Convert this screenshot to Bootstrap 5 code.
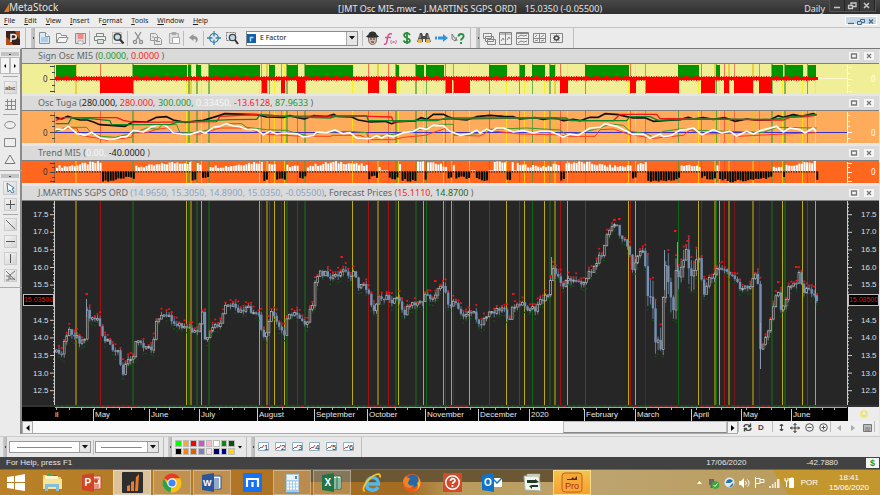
<!DOCTYPE html>
<html lang="en">
<head>
<meta charset="utf-8">
<meta name="viewport" content="width=device-width, initial-scale=1">
<title>MetaStock</title>
<link rel="stylesheet" href="https://cdn.jsdelivr.net/npm/bootstrap@5.3.0/dist/css/bootstrap.min.css">
<style>
body{font:8px/10px "Liberation Sans",Arial,sans-serif;background:#ebebeb;color:#333;min-height:100vh}
svg{display:block}
button,select{font:inherit;color:inherit}
.segoe{font-family:"Noto Sans","Open Sans",sans-serif}
.titlebar{height:14px;background:linear-gradient(#484848,#2e2e2e);color:#e4e4e4;font-size:9px;line-height:14px}
.brand-name{width:290px;font-size:10px}
.winbtns{background:#3b3b3b;border:1px solid #555;border-top:0;height:12px}
.winbtns button{width:15px;height:11px;padding:0;border:0;border-right:1px solid #222;background:none;color:#c8c8c8}
.menubar{height:14px;border-bottom:1px solid #c4c4c4;background:#ededed;padding:0 3px 0 4px}
.menubar a{color:#222;text-decoration:none;font-family:"Noto Sans",sans-serif;font-size:7px;line-height:13px;margin-right:9px}
.mdibtns{background:#c7d8e6;border:1px solid #fff;height:9px}
.mdibtns button{width:10px;height:8px;padding:0;border:0;background:none;color:#496a86}
.toolrow{height:20px;background:#ebebeb}
.tool{display:flex;align-items:center;justify-content:center;width:18px;height:18px;padding:0;border:0;background:none;color:#777;flex:none}
.tool.narrow{width:17px}
.tool.logo{width:25px}
.rule{width:1px;height:15px;background:#bdbdbd;margin-right:1px;flex:none}
.rule.tall{height:20px}
.grip{width:4px;height:20px;background:linear-gradient(90deg,#ccc,#b4b4b4);display:flex;align-items:center;justify-content:center;flex:none}
.grip::after{content:"";width:1px;height:2px;background:#444}
.pick{width:112px;height:15px;background:#fff;border:1px solid #8a8a8a;margin-left:5px}
.pick select{appearance:none;border:0;background:none;padding:0;font-family:"Noto Sans",sans-serif;font-size:7px;line-height:12px;color:#111;min-width:0}
.drop{width:11px;background:#e6e6e6;border-left:1px solid #aaa;display:flex;align-items:center;justify-content:center;pointer-events:none}
.side{width:22px;border-right:2px solid #8b8b8b;background:#ebebeb;border-top:1px solid #d8d8d8;flex:none}
.side .tool{height:17px;width:20px}
.side .tool svg{background:linear-gradient(135deg,#f4f4f4,#d4d4d4);border:1px solid #ccc}
.side .tool.flat svg{background:none;border-color:transparent}
.side hr{width:15px;margin:1px auto;border-color:#aaa;opacity:1}
.side hr.after-steps{margin:2px auto}
.side hr.full{width:22px;margin:3px 0}
.side-grip{width:18px;height:4px;margin:3px auto 1px;background:#c3c3c3;display:flex;align-items:center;justify-content:center}
.side-grip::after{content:"";width:2px;height:1px;background:#444}
.step{width:10px;height:17px;padding:0;border:1px solid #bbb;background:#f4f4f4}
.charts{background:#e6e6e6;border-top:1px solid #777;padding-right:1px;min-width:0}
.pane-head{height:15px;background:#dadada;border-bottom:1px solid #808080;padding-left:16px;font-size:9px;line-height:14px;color:#666;white-space:nowrap}
.pane-head button{width:10px;height:8px;padding:0;border:0;background:#f6f6f6;color:#777;margin-right:5px}
.c-green{color:#1f9a2b}.c-dkgreen{color:#1b6a20}.c-red{color:#fb2424}.c-white{color:#f6f6f6}.c-black{color:#222}.c-blue{color:#8ba6c4}
.plot-row{display:grid;grid-template-columns:33px minmax(0,1fr) 32px}
.plot-row svg{width:100%;height:100%}
.gap-two{margin-bottom:2px}
.gap-three{margin-bottom:3px}
.sign-row{height:30px;background:#f0ee96}
.osc-row{height:32px;background:#ffab5c}
.osc-row span{padding-top:12px}
.trend-row{height:22px;background:#ff671f}
.zero{display:grid;align-items:center;font-family:"Noto Sans",sans-serif;font-size:8px}
.zero>*{grid-area:1/1}
.zero span{padding-left:21px}
.zero.right{color:#fff}
.zero.right span{padding-left:24px}
.price-row{background:#262626;flex:1 1 204px;min-height:204px;color:#dedede}
.scale{display:grid;min-height:0}
.scale>*{grid-area:1/1;min-height:0}
.scale ol{display:flex;flex-direction:column;list-style:none;margin:0;padding:5px 0;font-size:8px}
.scale li{flex:1;display:flex;align-items:center;padding-left:11px}
.scale.right li{padding-left:14px}
.scale li.now,.scale.right li.now{padding-left:1px;align-items:flex-start}
.now b{background:#000;border:1px solid #bbb;color:#e01a1a;font-weight:400;font-size:7px;line-height:10px;width:31px;display:flex;justify-content:center}
.time-row{height:16px;background:#000;color:#e6e6e6;border-top:2px solid #333}
.time-box{display:grid;min-width:0}
.time-box>*{grid-area:1/1}
.months{display:grid;grid-template-columns:38fr 56fr 50fr 58fr 57fr 53fr 58fr 53fr 51fr 55fr 51fr 56fr 50fr 50fr 56fr;height:14px;padding-top:2px;font-size:8px;line-height:12px}
.months span{border-left:1px solid #ccc;padding-left:1px;white-space:nowrap;min-width:0}
.months span:first-child{border:0;padding:0}
.smile{background:#ececec;display:flex;align-items:center;justify-content:center;margin-left:1px}
.smile svg{width:8px;height:8px}
.scroll-row{height:13px;background:#efefef;color:#444}
.scroll-row .arrow{width:11px;height:13px;padding:0;border:1px solid #aaa;background:#f2f2f2;color:#111;display:flex;align-items:center;justify-content:center;flex:none}
.track{background:#fafafa;border-bottom:1px solid #aaa}
.thumb{width:164px;background:#efefef;border:1px solid #bbb;border-bottom-color:#888}
.scroll-row .tool{width:14px;height:13px;color:#444;font-weight:700}
.scroll-row .rule{height:11px;margin:0 1px 0 0}
.lower{height:21px;background:#e8e8e8;border-top:1px solid #ccc;margin-top:2px}
.lower .grip{margin-left:3px}
.linepick{height:12px;background:#fff;border:1px solid #999;display:grid;grid-template-columns:minmax(0,1fr) 11px}
.linepick select{appearance:none;border:0;padding:0;width:100%;height:10px;background:linear-gradient(#888,#888) center/80% 1px no-repeat}
.w-solid{width:82px;margin:0 2px}.w-thin{width:64px}
.swatches{display:grid;width:60px;grid-template-columns:repeat(8,1fr);grid-auto-rows:7px;gap:1px;margin:0 3px}
.swatches button{padding:0;border:1px solid #bbb}
.statusbar{height:12px;background:#424242;color:#e6e6e6;line-height:12px;padding-left:6px}
.bar-date{margin-right:60px}
.bar-value{margin-right:28px}
.dollar{width:13px;height:10px;background:#f4f4f4;color:#1a9a1a;font-weight:700;text-align:center;line-height:10px;font-size:9px;margin-right:1px}
.taskbar{height:26px;background:linear-gradient(#6b5734,#6b5734) 310px 0/280px 12px no-repeat,linear-gradient(57deg,transparent 660px,#c3962e 663px),linear-gradient(90deg,#b98228,#ae7424 30%,#a36a22 46%,#b99b5c 52%,#bda36e 68%,#b99a56);background-size:280px 12px,auto,auto;border-top:1px solid #7b6738;color:#fff}
.task{width:40px;height:25px;padding:0;border:1px solid transparent;background:none;display:flex;align-items:center;justify-content:center;flex:none}
.task.start{width:32px}
.task.open{background:#ffffff30;border-color:#ffffff50;width:38px;margin:0 1px}
.task.front{background:#ffffff88}
.task.hot{background:linear-gradient(#f4c34c,#f7a02c);border-color:#f7dc8c;width:38px;margin:0 1px}
.tray button{width:15px;height:20px;border:0;padding:0;background:none;display:flex;align-items:center;justify-content:center;color:#fff}
.clock{width:62px;text-align:center;line-height:10px}
</style>
<script src="https://cdn.jsdelivr.net/npm/bootstrap@5.3.0/dist/js/bootstrap.bundle.min.js"></script>
</head>
<body class="d-flex flex-column m-0">

<header class="titlebar segoe d-flex">
  <div class="brand-name d-flex align-items-center ps-1"><svg width="5" height="9"><path d="M0 9 5 1v8z" fill="#e0762a"/></svg>MetaStock</div>
  <div class="flex-grow-1 ps-5 text-nowrap pt-1 lh-1"><span>[JMT Osc MI5.mwc - J.MARTINS SGPS ORD]</span><span class="ps-2">15.0350 (-0.05500)</span></div>
  <div class="pe-1 pt-1 lh-1">Daily</div>
  <div class="winbtns d-flex me-1">
    <button aria-label="Minimise"><svg width="13" height="9"><path d="M4 6.500h6" stroke="currentColor" stroke-width="1.500"/></svg></button>
    <button aria-label="Restore"><svg width="13" height="9" fill="none" stroke="currentColor" stroke-width="1.300"><path d="M3.500 4.500h4v3h-4zM6 4V2h5v3.500H8"/></svg></button>
    <button aria-label="Close"><svg width="13" height="9"><path d="m4 2 5 5m0-5L4 7" stroke="currentColor" stroke-width="1.500"/></svg></button>
  </div>
</header>

<nav class="menubar d-flex align-items-center" aria-label="Main menu">
  <div class="d-flex flex-grow-1" id="menu"></div>
  <div class="mdibtns d-flex">
    <button aria-label="Minimise window"><svg width="10" height="7"><path d="M2 5.500h6" stroke="currentColor" stroke-width="1.300"/></svg></button>
    <button aria-label="Restore window"><svg width="10" height="7" fill="none" stroke="currentColor"><path d="M1.500 3.500h4v3h-4zM4.500 3V1.500h4v3H6"/></svg></button>
    <button aria-label="Close window"><svg width="10" height="7"><path d="m3 1.500 4 4m0-4-4 4" stroke="currentColor" stroke-width="1.300"/></svg></button>
  </div>
</nav>

<div class="toolrow d-flex align-items-center">
  <button class="tool logo" aria-label="Power Console"><svg width="14" height="14"><rect width="14" height="14" fill="#3a211a"/><path d="M0 14V6l4 3 3 5zM9 0h5v9l-3-4z" fill="#b14e1c"/><path d="M5 11V3.500h3a2 2 0 0 1 0 4.500H5" fill="none" stroke="#eee" stroke-width="1.600"/></svg></button>
  <span class="rule tall"></span><span class="grip ms-1"></span>
  <button class="tool" aria-label="New"><svg width="13" height="14"><path d="M1.500 1.500h6l4 4v7h-10z" fill="#dbe9f2" stroke="#84919b"/><path d="M3 6h7v5H3z" fill="#a7d0e8"/><path d="M7.500 1.500v4h4" fill="#fff" stroke="#84919b"/></svg></button>
  <button class="tool" aria-label="Open"><svg width="14" height="12" fill="#f5f5f5" stroke="#8b8b8b"><path d="M1.500 10.500v-9h4l1 2h5v2M1.500 10.500l2.500-5h9l-2 5z"/></svg></button>
  <button class="tool" aria-label="Save"><svg width="13" height="13"><path d="M1.500 1.500h10v10h-10z" fill="#ddd" stroke="#8d8d8d"/><path d="M3.500 2h6v5h-6z" fill="#f08c8c"/><path d="M4 9h5v3H4z" fill="#f7f7f7" stroke="#888" stroke-width=".6"/></svg></button>
  <span class="rule"></span>
  <button class="tool" aria-label="Print"><svg width="14" height="13" fill="#eee" stroke="#838383"><path d="M3.500 4.500v-3h7v3M1.500 4.500h11v4h-11z"/><path d="M4.500 7.500h6v4h-6z" fill="#d9e4d9"/></svg></button>
  <button class="tool" aria-label="Preview"><svg width="14" height="14"><path d="M1.500 1.500h9v11h-9z" fill="#eee" stroke="#bbb"/><circle cx="6.500" cy="6" r="3.300" fill="#bfe1ee" stroke="#444" stroke-width="1.500"/><path d="m9 8.500 3.500 4" stroke="#333" stroke-width="2"/></svg></button>
  <span class="rule"></span>
  <button class="tool" aria-label="Cut"><svg width="12" height="14" fill="none" stroke="#8b8b8b" stroke-width="1.300"><path d="m3 1 5 8M9 1 4 9"/><circle cx="3" cy="11" r="1.600"/><circle cx="9" cy="11" r="1.600"/></svg></button>
  <button class="tool" aria-label="Copy"><svg width="14" height="13" fill="#e8e8e8" stroke="#999"><path d="M1.500 1.500h5l2 2v5h-7zM5.500 5.500h5l2 2v5h-7z"/><path d="M7 9.500h4M3 5h2"/></svg></button>
  <button class="tool" aria-label="Paste"><svg width="13" height="14" fill="#e2e2e2" stroke="#aaa"><path d="M1.500 2.500h9v10h-9zM4 1.500h4v2H4z"/><path d="M4.500 6.500h7v6h-7z" fill="#fafafa"/></svg></button>
  <span class="rule"></span>
  <button class="tool" aria-label="Undo"><svg width="12" height="12"><path d="M1 5.500 5.500 2v2c5 0 6 5 1.500 7 2-3 .5-4-1.500-4v2z" fill="#969696"/></svg></button>
  <span class="rule"></span>
  <button class="tool" aria-label="Crosshair"><svg width="14" height="14" fill="none" stroke="#3584ae" stroke-width="1.300"><circle cx="7" cy="7" r="4.300"/><path d="M7 0v5.500M7 8.500V14M0 7h5.500M8.500 7H14"/></svg></button>
  <button class="tool" aria-label="Zoom box"><svg width="14" height="14"><path d="M1.500 1.500h9v8h-9z" fill="none" stroke="#777" stroke-dasharray="2 1"/><circle cx="7.500" cy="6.500" r="3.200" fill="#bdd8e8" stroke="#444" stroke-width="1.300"/><path d="m10 9 3 4" stroke="#333" stroke-width="2"/></svg></button>
  <div class="pick d-flex align-items-stretch">
    <svg class="m-auto mx-1 ms-0" width="9" height="10"><rect y="1" width="9" height="9" fill="#155fa8"/><path d="M3.500 8.500V4.500h3" fill="none" stroke="#9fe0ff" stroke-width="1.500"/></svg>
    <select class="flex-grow-1" aria-label="Expert"><option>E Factor</option></select>
    <span class="drop"><svg width="6" height="4"><path d="M0 0h6L3 3.500z" fill="#111"/></svg></span>
  </div>
  <span class="rule ms-1"></span>
  <button class="tool narrow" aria-label="Expert Advisor"><svg width="13" height="14"><path d="M2.500 5h8v4c0 6-8 6-8 0z" fill="#d5b8a4" stroke="#555" stroke-width=".7"/><path d="M0 6c2 1 10 1 13 0-1-2-3-2-3-4-2-2-5-2-7 0 0 2-2 2-3 4z" fill="#303030"/><path d="M4 8h2m1 0h2M5 11h3" stroke="#333"/></svg></button>
  <button class="tool narrow" aria-label="Indicator builder"><svg width="14" height="13" fill="none" stroke="#d65091" stroke-width="1.500"><path d="M1 12c3 1 3-3 3.500-6S6 1 9 2M2 5.500h6"/><path d="M8.500 8c-1 1-1 2 0 4M12.500 8c1 1 1 2 0 4M9.500 9l2 2m0-2-2 2" stroke-width=".9"/></svg></button>
  <button class="tool narrow" aria-label="System tester"><svg width="10" height="14" fill="none" stroke="#258a37" stroke-width="1.700"><path d="M8 4C6 1 2 2 2 4.500S8 7 8 9.500 3 12.500 1.500 9.500M5 1v12"/></svg></button>
  <button class="tool narrow" aria-label="Explorer"><svg width="14" height="12"><path d="m3 1 2 0 1 3h2l1-3h2l3 9H8V7H6v3H0z" fill="#4b4b4b"/><circle cx="3" cy="9" r="2.200" fill="#e1b44d"/><circle cx="11" cy="9" r="2.200" fill="#e1b44d"/><path d="M3 3v3m8-3v3" stroke="#aaa"/></svg></button>
  <button class="tool narrow" aria-label="Go"><svg width="14" height="8"><path d="M1 2.500h2v3H1zm3 0h5V0l5 4-5 4V5.500H4z" fill="#3294dc"/></svg></button>
  <button class="tool narrow" aria-label="Context help"><svg width="14" height="13" fill="none"><path d="M1 2l4 6M1 2v5l3 2 1-1M5 5l1 4" stroke="#777"/><path d="M7.500 4.500C7.500 1 13 1 12.500 4.500c0 2-2.500 2-2.500 4M10 10v2" stroke="#27943c" stroke-width="2"/></svg></button>
  <span class="rule tall ms-1"></span><span class="grip ms-1"></span>
  <button class="tool narrow" aria-label="Cascade"><svg width="14" height="13" fill="#eee" stroke="#858585"><path d="M1.500 1.500h8v5h-8zM3.500 4.500h8v5h-8zM5.500 7.500h8v5h-8z"/></svg></button>
  <button class="tool narrow" aria-label="Tile columns"><svg width="13" height="13" fill="#eee" stroke="#858585"><path d="M.5.500h12v12H.5zM6.500 1v12M.500 2h12"/><path d="m2 9 2-3 1 2m3 0 2-3 1 2"/></svg></button>
  <button class="tool narrow" aria-label="Tile rows"><svg width="13" height="13" fill="#eee" stroke="#858585"><path d="M.5.500h12v12H.5zM1 6.500h12M.500 1.500h12"/><path d="m2 5 3-2 3 1 3-1M2 11l3-2 3 1 3-1"/></svg></button>
  <button class="tool narrow" aria-label="Tile grid"><svg width="13" height="12" fill="#eee" stroke="#858585"><path d="M.5 1.500h12v9H.5zM6.500 2v9M1 6.500h12"/><path d="m2 5 2-2m4 2 3-2M2 9l3-1m3 1 3-1"/></svg></button>
  <button class="tool narrow" aria-label="Layout options"><svg width="13" height="12" fill="#eee" stroke="#858585"><path d="M.5 1.500h12v9H.5z"/><circle cx="6.500" cy="6" r="2" stroke="#444" stroke-width="1.500"/><path d="M6.500 2.500v1m0 5v1M3 6h1m5 0h1M4 3.500l1 1m3 3 1 1m0-5-1 1m-3 3-1 1" stroke="#444"/></svg></button>
  <span class="rule tall ms-2"></span>
</div>

<main class="d-flex flex-grow-1">
  <aside class="side" aria-label="Drawing tools">
    <div class="side-grip"></div>
    <div class="d-flex">
      <button class="step" aria-label="Previous"><svg width="8" height="6"><path d="M5 1v4L3 3z"/></svg></button><button class="step" aria-label="Next"><svg width="8" height="6"><path d="M3 1v4l2-2z"/></svg></button>
    </div>
    <hr class="after-steps">
    <button class="tool" aria-label="Text"><svg width="13" height="13"><text x="0" y="8" font-size="6" font-weight="700" fill="#555">abc</text></svg></button>
    <button class="tool flat" aria-label="Grid"><svg width="13" height="13" stroke="#888"><path d="M2.500 0v13M6.500 0v13M10.500 0v13M0 2.500h13M0 6.500h13M0 10.500h13"/></svg></button>
    <hr>
    <button class="tool flat" aria-label="Ellipse"><svg width="14" height="12"><ellipse cx="6" cy="5" rx="5.300" ry="3.500" fill="#eee" stroke="#888"/></svg></button>
    <button class="tool flat" aria-label="Rectangle"><svg width="14" height="12"><path d="M.500 1.500h11v8H.5z" fill="#eee" stroke="#888"/></svg></button>
    <button class="tool flat" aria-label="Triangle"><svg width="14" height="12"><path d="M1 9.500 6 1l5 8.500z" fill="#eee" stroke="#777"/></svg></button>
    <hr class="full">
    <div class="side-grip"></div>
    <button class="tool" aria-label="Select"><svg width="14" height="14"><path d="m3 1 7 5-2 1 2 3-2 1-2-3-2 2z" fill="#fff" stroke="#3a7ebb"/></svg></button>
    <button class="tool" aria-label="Cross"><svg width="13" height="13" stroke="#555"><path d="M5.500 1v9M1 5.500h9" /></svg></button>
    <hr>
    <button class="tool" aria-label="Trendline"><svg width="13" height="13" stroke="#666"><path d="m1 1 9 9"/></svg></button>
    <button class="tool" aria-label="Horizontal line"><svg width="13" height="13" stroke="#555"><path d="M1 5.500h9"/></svg></button>
    <button class="tool" aria-label="Vertical line"><svg width="13" height="13" stroke="#555"><path d="M5.500 1v9"/></svg></button>
    <button class="tool" aria-label="More lines"><svg width="13" height="13" stroke="#777" fill="none"><path d="m1 1 9 9M10 1 5 5v4h5M1 6h3v4H1"/></svg></button>
    <hr class="full">
  </aside>

  <section class="charts flex-grow-1 d-flex flex-column" aria-label="Charts">
    <div class="pane-head segoe d-flex"><div class="flex-grow-1">Sign Osc MI5 (<span class="c-green">0.0000,</span> <span class="c-red">0.0000</span> )</div><div class="d-flex align-items-center panebtns"></div></div>
    <div class="plot-row sign-row gap-two">
      <div class="zero"><svg viewBox="0 0 33 30"><path d="M33 1v28M28 2.500h5M30 8.500h3M28 15.500h5M30 21.500h3M28 27.500h5" stroke="#444"/></svg><span>0</span></div>
      <svg id="sign" viewBox="55 64 792 30" preserveAspectRatio="none"></svg>
      <div class="zero right"><svg viewBox="0 0 32 30"><path d="M.5 1v28M0 3.500h5M0 9.500h3M0 15.500h5M0 21.500h3M0 27.500h5" stroke="#fff"/></svg><span>0</span></div>
    </div>
    <div class="pane-head segoe d-flex"><div class="flex-grow-1">Osc Tuga (<span class="c-black">280.000,</span> <span class="c-red">280.000,</span> <span class="c-green">300.000,</span> <span class="c-white">0.33450,</span> <span class="c-red">-13.6128,</span> <span class="c-green">87.9633</span> )</div><div class="d-flex align-items-center panebtns"></div></div>
    <div class="plot-row osc-row gap-three">
      <div class="zero"><svg viewBox="0 0 33 32"><path d="M33 1v31M28 4.500h5M30 10.500h3M30 15.500h3M28 21.500h5M30 27.500h3" stroke="#444"/></svg><span>0</span></div>
      <svg id="osc" viewBox="165 189 2376 96" preserveAspectRatio="none"></svg>
      <div class="zero right"><svg viewBox="0 0 32 32"><path d="M.5 1v31M0 4.500h3M0 10.500h3M0 15.500h3M0 21.500h5M0 27.500h3" stroke="#fff"/></svg><span>0</span></div>
    </div>
    <div class="pane-head segoe d-flex"><div class="flex-grow-1">Trend MI5 (<span class="c-white">0.00,</span> <span class="c-black">-40.0000</span> )</div><div class="d-flex align-items-center panebtns"></div></div>
    <div class="plot-row trend-row gap-three">
      <div class="zero"><svg viewBox="0 0 33 22"><path d="M33 1v21M28 2.500h5M30 6.500h3M28 11.500h5M30 16.500h3M28 20.500h5" stroke="#444"/></svg><span>0</span></div>
      <svg id="trend" viewBox="165 339 2376 66" preserveAspectRatio="none"></svg>
      <div class="zero right"><svg viewBox="0 0 32 22"><path d="M.5 1v21M0 2.500h5M0 6.500h3M0 11.500h5M0 16.500h3M0 20.500h5" stroke="#fff"/></svg><span>0</span></div>
    </div>
    <div class="pane-head segoe d-flex"><div class="flex-grow-1">J.MARTINS SGPS ORD <span class="c-blue">(14.9650, 15.3050, 14.8900, 15.0350, -0.05500)</span>, Forecast Prices (<span class="c-red">15.1110,</span> <span class="c-dkgreen">14.8700</span> )</div><div class="d-flex align-items-center panebtns"></div></div>
    <div class="plot-row price-row">
      <div class="scale"><svg id="ticksL" viewBox="0 201 33 204" preserveAspectRatio="none"></svg><ol class="levels"></ol></div>
      <svg id="price" viewBox="55 201 792 204" preserveAspectRatio="none"></svg>
      <div class="scale right"><svg id="ticksR" viewBox="0 201 32 204" preserveAspectRatio="none"></svg><ol class="levels"></ol></div>
    </div>
    <div class="plot-row time-row">
      <span></span>
      <div class="time-box"><svg id="weeks" viewBox="55 0 792 14" preserveAspectRatio="none"></svg><div class="months" id="months"></div></div>
      <div class="smile"><svg width="8" height="8" fill="none" stroke="#f2e21a"><circle cx="4" cy="4" r="3.300"/><path d="M2.500 3h.5m2 0h.5M2 4.500c1 1.500 3 1.500 4 0"/></svg></div>
    </div>
    <div class="scroll-row d-flex align-items-stretch">
      <button class="arrow" aria-label="Scroll left"><svg width="4" height="6"><path d="M3.500 0v6L0 3z"/></svg></button>
      <div class="track flex-grow-1 d-flex justify-content-end"><div class="thumb"></div></div>
      <button class="arrow" aria-label="Scroll right"><svg width="4" height="6"><path d="M0 0v6l3.500-3z"/></svg></button>
      <span class="rule"></span>
      <button class="tool" aria-label="Refresh"><svg width="9" height="9" fill="none" stroke="#444" stroke-width="1.400"><path d="M1 4c0-3 4-3 6-1M8 5c0 3-4 3-6 1"/><path d="M7.500.500V3.500H5M1.500 8.500V5.500H4"/></svg></button>
      <button class="tool" aria-label="Daily">D</button>
      <span class="rule ms-1"></span>
      <button class="tool" aria-label="Rescale"><svg width="7" height="9" stroke="#444" fill="#444"><path d="M3.500 1v7M2 2.500 3.500 1 5 2.500zM2 6.500 3.500 8 5 6.500z"/></svg></button>
      <button class="tool" aria-label="Move"><svg width="10" height="10" stroke="#333" fill="none"><path d="M5 .500v9M.500 5h9M3.500 2 5 .500 6.500 2M3.500 8 5 9.500 6.500 8M2 3.500.500 5 2 6.500M8 3.500 9.500 5 8 6.500"/></svg></button>
      <button class="tool" aria-label="Zoom out"><svg width="9" height="9" stroke="#555" fill="none"><circle cx="4.500" cy="4.500" r="3.800"/><path d="M2.500 4.500h4"/></svg></button>
      <button class="tool" aria-label="Zoom in"><svg width="9" height="9" stroke="#555" fill="none"><circle cx="4.500" cy="4.500" r="3.800"/><path d="M2.500 4.500h4m-2-2v4"/></svg></button>
      <span class="rule"></span>
      <button class="tool" aria-label="Back"><svg width="4" height="6"><path d="M4 0v6L0 3z" fill="#aaa"/></svg></button>
      <button class="tool" aria-label="Forward"><svg width="4" height="6"><path d="M0 0v6l4-3z" fill="#aaa"/></svg></button>
      <button class="tool" aria-label="Data window"><svg width="9" height="8"><path d="M.5.500h8v7h-8z" fill="#bbb" stroke="#777"/><path d="M2 4h5M2 6h5" stroke="#777"/></svg></button>
      <span class="rule me-1"></span>
    </div>
  </section>
</main>

<div class="lower d-flex align-items-center">
  <span class="grip"></span>
  <label class="linepick w-solid"><select aria-label="Line style"><option aria-label="Solid"></option></select><span class="drop"><svg width="6" height="4"><path d="M0 0h6L3 3.500z" fill="#111"/></svg></span></label>
  <span class="rule"></span>
  <label class="linepick w-thin"><select aria-label="Line weight"><option aria-label="Thin"></option></select><span class="drop"><svg width="6" height="4"><path d="M0 0h6L3 3.500z" fill="#111"/></svg></span></label>
  <span class="rule tall ms-1"></span><span class="grip"></span>
  <div class="swatches" id="swatches"></div>
  <svg width="4" height="3"><path d="M0 0h4L2 2.500z"/></svg>
  <span class="rule tall ms-1"></span><span class="grip"></span>
  <div class="d-flex" id="layouts"></div>
  <span class="rule tall ms-1"></span>
</div>

<div class="statusbar d-flex align-items-center">
  <span class="flex-grow-1">For Help, press F1</span><span class="bar-date">17/06/2020</span><span class="bar-value">-42.7880</span><span class="dollar">$</span>
</div>

<footer class="taskbar d-flex">
  <button class="task start" aria-label="Start"><svg width="18" height="17" fill="#fff"><path d="m0 3 7-1v6H0zM8 2l10-2v8H8zM0 9h7v6l-7-1zM8 9h10v8L8 15.500z"/></svg></button>
  <button class="task" aria-label="File Explorer"><svg width="21" height="19"><path d="M1 2h7l1 2h10v12H1z" fill="#e8d36c"/><path d="M3 3h13v4H3z" fill="#f9f4cf"/><path d="M5 1h5v2H5z" fill="#4ca64c"/><path d="M11 2h4v1h-4z" fill="#d33"/><path d="M1 6h19v10H1z" fill="#f5e596"/><path d="M3 18v-7h14v7h-3v-4H6v4z" fill="#87bddc"/></svg></button>
  <button class="task" aria-label="PowerPoint"><svg width="20" height="19"><path d="M8 3h11v13H8z" fill="#f7e6e0" stroke="#d04526"/><path d="M12 6h5M12 12h5M12 14h5" stroke="#d04526"/><circle cx="14" cy="8" r="2" fill="#d04526"/><path d="m0 2 12-2v19L0 17z" fill="#d04526"/><text x="2.500" y="13" font-size="10" font-weight="700" fill="#fff">P</text></svg></button>
  <button class="task open front" aria-label="MetaStock"><svg width="21" height="21"><rect width="21" height="21" rx="1" fill="#2d2d2d"/><path d="M5 19v-5l3-1v6zM9 19v-9l3-1v10zM13 19 14 5l3-3-1 17z" fill="#ee7b26"/></svg></button>
  <button class="task open" aria-label="Chrome"><svg width="20" height="20"><circle cx="10" cy="10" r="9.500" fill="#fbc116"/><path d="M10 10 1.800 5.200A9.500 9.500 0 0 1 18.200 5.200H10z" fill="#e33b2e"/><path d="M10 10 8.500 19.400A9.500 9.500 0 0 1 1.800 5.200L6 12z" fill="#2ba24c"/><circle cx="10" cy="10" r="4.700" fill="#fff"/><circle cx="10" cy="10" r="3.600" fill="#4285f4"/></svg></button>
  <button class="task open" aria-label="Word"><svg width="20" height="19"><path d="M8 3h11v13H8z" fill="#fff" stroke="#2b579a"/><path d="M12 6h5M12 8h5M12 10h5M12 12h5M12 14h5" stroke="#2b579a"/><path d="m0 2 12-2v19L0 17z" fill="#2b579a"/><text x="1" y="13" font-size="9" font-weight="700" fill="#fff">W</text></svg></button>
  <button class="task" aria-label="Maxthon"><svg width="19" height="19"><rect width="19" height="19" rx="1" fill="#1672f5"/><path d="M4 14V6h11v8M9.500 9v5" fill="none" stroke="#fff" stroke-width="2.200"/></svg></button>
  <button class="task open" aria-label="Calculator"><svg width="15" height="20"><rect x=".5" y=".5" width="14" height="19" rx="1" fill="#a9cde6" stroke="#6f9fc0"/><path d="M2 2h11v5H2z" fill="#e9f5fb"/><path d="M2 9.500h11M2 12.500h11M2 15.500h11" stroke="#fff" stroke-width="2" stroke-dasharray="2 1"/><path d="M10 3h2v3h-2z" fill="#5c88a8"/></svg></button>
  <button class="task open" aria-label="Excel"><svg width="20" height="19"><path d="M8 3h11v13H8z" fill="#fff" stroke="#217346"/><path d="M12 6h6M12 8h6M12 10h6M12 12h6M12 14h6M15 4v12" stroke="#217346"/><path d="m0 2 12-2v19L0 17z" fill="#217346"/><text x="2.500" y="13" font-size="10" font-weight="700" fill="#fff">X</text></svg></button>
  <button class="task" aria-label="Internet Explorer"><svg width="20" height="20" fill="none"><path d="M4.500 11h12c0-9-12-8-12 0 0 7 9 8 11.500 3" stroke="#4db9ee" stroke-width="3.400"/><path d="M3 18C-1 18 3 9 9 4.500S19 0 18 4.500" stroke="#f7c627" stroke-width="1.700"/></svg></button>
  <button class="task" aria-label="Firefox"><svg width="20" height="20"><circle cx="10" cy="10" r="9.200" fill="#e65c1c"/><circle cx="10.500" cy="8" r="6.500" fill="#2a67a5"/><path d="M16 4c5 6 2 14-6 14 6-1 7-5 5-8 2-1 2-3 1-6z" fill="#f6b42d"/><path d="M1 8c1-3 2-4 3-5 0 1 2 2 4 2 0 2-2 3-2 5 1 3 4 3 6 2-2 5-10 4-11-4z" fill="#f08022"/></svg></button>
  <button class="task" aria-label="Help"><svg width="19" height="19"><rect width="19" height="19" fill="#d24a2a"/><circle cx="9.500" cy="9.500" r="6.800" fill="none" stroke="#fff" stroke-width="1.500"/><path d="M7.500 8c0-3 4.500-3 4.500-.5 0 2-2.500 1.500-2.500 3.500M9.500 12v2" fill="none" stroke="#fff" stroke-width="1.700"/></svg></button>
  <button class="task" aria-label="Outlook"><svg width="20" height="19"><path d="M9 5h11v9H9z" fill="#fff"/><path d="m11 6 4 4 5-5" fill="none" stroke="#1173c7" stroke-width="1.500"/><path d="m0 2 12-2v19L0 17z" fill="#1173c7"/><text x="2" y="13" font-size="10" font-weight="700" fill="#fff">O</text></svg></button>
  <button class="task" aria-label="Transfer"><svg width="20" height="19"><path d="M5 1h13v3H5z" fill="#dfe6d8" stroke="#8f9a85" stroke-width=".6"/><path d="M2 3h15l2 15-16-1z" fill="#f2f5ee" stroke="#a7b09b"/><path d="M5 7h8V6l4 3-3 1H5zM16 14h-6v2l-3-3 3-1h6z" fill="#1d3b26"/></svg></button>
  <button class="task hot" aria-label="Pro"><svg width="22" height="21"><rect x="1" y="1" width="20" height="19" rx="3" fill="#f5a838" stroke="#c4601a"/><path d="M6 7h4l2-2 1 2 3-3v4H6z" fill="#5b2a18"/><text x="4" y="17" font-size="9" fill="#b4231c">Pro</text></svg></button>
  <div class="tray d-flex align-items-center ms-auto">
    <button aria-label="Show hidden"><svg width="5" height="3"><path d="M0 3 2.500 0 5 3z" fill="#fff"/></svg></button>
    <button aria-label="USB"><svg width="12" height="12"><path d="M1 2h5v6H1zM2.500 8h2v3h-2z" fill="#666"/><circle cx="7.500" cy="8" r="3.800" fill="#38a838"/><path d="m5.500 8 1.500 1.500 2.500-3" stroke="#fff" fill="none"/></svg></button>
    <button aria-label="Sync"><svg width="11" height="11"><circle cx="5.500" cy="5.500" r="5" fill="#dbe9f2"/><path d="M2 6c0-4 5-5 7-2L6 6zM5 10c3 0 5-2 4-4z" fill="#2373a8"/></svg></button>
    <button aria-label="Volume"><svg width="11" height="10" fill="none" stroke="#fff"><path d="M0 3h2l3-3v10L2 7H0z" fill="#fff" stroke="none"/><path d="M6.500 3c1 1 1 3 0 4M8.500 1.500c2 2 2 5 0 7"/></svg></button>
    <button aria-label="Action Center"><svg width="11" height="11" stroke="#fff" fill="none"><path d="M1.500 0v11M2 1.500h4v5H2M6 2.500h4v3H6"/></svg></button>
    <button aria-label="Network"><svg width="11" height="10"><path d="M0 10h2V8H0zM3 10h1.500V6H3zM5.500 10H7V4H5.500zM8 10h2.500V1H8z" fill="#ffffffc8"/></svg></button>
    <button aria-label="Battery"><svg width="11" height="11"><path d="M5.500 1.500h4v9h-4zM7 0h2" fill="#fff" stroke="#fff"/><path d="M1 1v3h3V1M2.500 4v6" stroke="#fff" fill="none"/></svg></button>
    <span class="ps-1">POR</span>
    <div class="clock">18:41<br>15/06/2020</div>
  </div>
</footer>

<script>
const $ = id => document.getElementById(id);

/* Menus */
[['F','ile'],['E','dit'],['V','iew'],['I','nsert'],['F','ormat','o'],['T','ools'],['W','indow'],['H','elp']].forEach(([a, b, u]) => {
  const html = u ? a + '<u>o</u>rmat'.replace('ormat', 'rmat') : '<u>' + a + '</u>' + b;
  $('menu').insertAdjacentHTML('beforeend', `<a href="#">${html}</a>`);
});

/* Pane window buttons */
document.querySelectorAll('.panebtns').forEach(e => e.innerHTML =
  '<button aria-label="Maximise pane"><svg width="10" height="8"><path d="M2.500 2h5v4h-5z" fill="none" stroke="currentColor" stroke-width="1.300"/></svg></button>' +
  '<button aria-label="Close pane"><svg width="10" height="8"><path d="m3 2 4 4m0-4L3 6" stroke="currentColor" stroke-width="1.300"/></svg></button>');

/* Signal lines: position and kind (Y yellow, O olive, R red, D dim red, G green, g dim green) */
const signals = '75O 100R 132g 186Y 188g 190O 196g 201Y 208g 259Y 261D 266O 269G 274Y 281D 284Y 286g 297R 304g 352Y 368R 377O 388R 395g 398Y 415g 423Y 426G 443Y 445R 451Y 453D 469Y 489G 506Y 519G 524Y 532G 544Y 549g 554O 560R 567Y 585G 628Y 630R 635Y 645D 678G 698Y 701R 714O 716G 719Y 724R 728O 734D 752O 759D 771g 782Y 784g 802Y 807G 815Y'
  .split(' ').map(s => [parseInt(s), s.slice(-1)]);
const dark = {Y:'#b9ab0c', O:'#7c6d15', R:'#a31212', D:'#7a1616', G:'#0d6912', g:'#1d4c1e'};
const bright = {Y:'#fff000', O:'#e3c420', R:'#ff3a28', D:'#f2533c', G:'#2b9b2b', g:'#5a9c3c'};
const lines = (pal, y, h, k, op) => signals.map(([x, t]) =>
  `<rect x="${x*k}" y="${y}" width="${(/[Og]/.test(t) ? 2 : 1)*k}" height="${h}" fill="${pal[t]}" opacity="${op}"/>`).join('');

/* Sign oscillator */
const greens = [[56,76],[133,187],[188,191],[196,201],[209,260],[269,275],[287,298],[305,353],[396,399],[416,424],[426,444],[489,507],[520,525],[532,545],[550,555],[585,629],[678,699],[716,720],[772,783],[785,803],[808,816]];
const reds = [[100,133],[262,267],[281,285],[297,305],[368,379],[388,396],[446,452],[454,470],[560,568],[630,636],[646,679],[701,715],[724,729],[734,753],[759,772]];
const box = (r, y, h, c) => r.map(([a, b]) => `<rect x="${a}" y="${y}" width="${b-a}" height="${h}" fill="${c}"/>`).join('');
$('sign').innerHTML = '<path d="M817 78.500h30" stroke="#fff8d0"/>' + lines(bright, 64, 30, 1, .7) + box(greens, 65, 12, '#009400') + box(reds, 80, 13, '#fe0000') +
  '<rect x="55" y="77" width="763" height="3" fill="#f00"/><path d="M56 76.500h760M56 80.500h760" stroke="#f00" stroke-dasharray="1 1.500"/>';

/* Tuga oscillator */
const poly = (s, c, w) => `<polyline points="${s}" fill="none" stroke="${c}" stroke-width="${w}" stroke-linejoin="round"/>`;
const black = '167,208 185,213 203,205 240,216 262,216 280,222 300,230 375,235 400,221 440,222 470,208 500,206 520,216 555,223 610,217 650,205 675,197 740,199 770,200 800,207 850,208 870,203 890,208 913,213 940,203 980,206 1002,199 1010,205 1055,207 1075,216 1110,222 1155,220 1175,227 1190,221 1245,219 1263,209 1280,214 1300,199 1330,199 1345,206 1365,213 1400,216 1430,206 1470,202 1510,205 1540,206 1560,213 1605,209 1630,214 1655,210 1670,211 1690,218 1720,214 1740,218 1770,208 1795,208 1815,197 1855,200 1880,206 1900,210 1935,209 1960,220 2000,217 2040,215 2065,208 2080,213 2110,209 2140,214 2175,209 2205,220 2240,213 2265,216 2310,216 2335,203 2350,208 2380,200 2405,205 2440,197 2448,200';
const redHi = '167,217 190,209 350,209 370,217 400,223 650,221 660,205 780,199 830,204 1105,205 1175,207 1180,222 1280,215 1510,211 1590,209 1700,215 1735,218 1840,218 1860,199 1970,199 1980,212 2070,212 2200,214 2350,216 2370,208 2420,206 2450,201';
const greenHi = '167,227 205,227 215,209 270,212 330,218 335,230 510,230 530,223 690,215 770,214 780,200 870,206 990,210 1010,204 1100,203 1105,218 1310,218 1340,210 1700,210 1710,218 1880,218 1890,206 1950,206 1975,217 2080,213 2320,214 2360,208 2450,199';
const white = '167,243 190,245 205,235 230,256 255,262 275,253 300,270 330,275 350,272 362,267 380,266 400,247 430,252 455,236 470,232 485,229 500,235 520,255 545,258 570,259 600,250 615,256 640,238 660,235 680,227 700,234 720,236 740,244 770,245 790,260 810,250 830,258 850,255 870,256 893,258 910,267 940,262 950,252 980,254 1005,246 1030,257 1050,254 1070,270 1110,272 1130,263 1145,270 1160,262 1180,266 1210,254 1240,250 1260,240 1280,244 1300,232 1330,233 1350,250 1380,262 1410,257 1430,246 1440,255 1460,244 1475,250 1490,240 1510,240 1540,252 1570,248 1600,255 1620,250 1650,250 1670,258 1690,267 1710,258 1735,262 1770,240 1800,238 1815,227 1850,235 1880,250 1900,260 1930,258 1950,271 1980,258 1990,266 2015,262 2040,246 2060,245 2080,240 2105,260 2140,245 2165,255 2190,250 2210,264 2240,250 2260,258 2280,248 2330,235 2350,252 2370,240 2400,245 2415,255 2440,240 2448,252';
const greenLo = '167,250 205,238 260,238 275,257 305,265 345,268 400,255 440,240 475,244 485,230 530,230 540,255 600,252 660,235 690,227 725,227 740,238 800,245 860,247 880,253 930,265 960,253 1050,250 1100,254 1105,270 1160,262 1210,254 1290,238 1320,229 1360,229 1362,262 1430,257 1470,244 1580,240 1680,246 1700,260 1740,255 1800,240 1830,228 1870,232 1890,250 1940,257 1960,268 1990,250 2040,243 2100,247 2190,250 2290,253 2330,238 2450,240';
const redLo = '167,250 190,240 230,240 240,262 290,270 320,277 395,268 400,255 440,254 470,244 500,240 520,257 600,258 660,240 740,240 790,258 890,264 990,265 1000,262 1080,262 1110,275 1180,275 1210,268 1275,262 1340,240 1370,262 1440,264 1470,248 1560,258 1660,260 1710,265 1785,265 1800,245 1840,243 1890,260 1960,271 2050,262 2070,246 2110,258 2200,256 2215,265 2270,262 2350,258 2450,254';
$('osc').innerHTML = lines(bright, 189, 96, 3, .7) + '<path d="M165 253.500H2541" stroke="#3a2fd0" stroke-width="3"/>' +
  poly(redLo, '#ff3a1c', 3) + poly(greenLo, '#3f9a26', 3) + poly(white, '#fff', 5) + poly(black, '#111', 5) + poly(redHi, '#f01818', 4) + poly(greenHi, '#11872a', 4);

/* Trend bars */
const neg = [[302,400],[572,585],[605,622],[785,805],[828,855],[893,915],[1105,1135],[1163,1190],[1202,1247],[1271,1280],[1338,1355],[1360,1408],[1428,1460],[1520,1535],[1680,1690],[1890,1905],[1936,2035],[2103,2143],[2158,2315],[2350,2355],[2447,2453]];
const flat = [[1138,1160],[1410,1426],[1462,1480],[1538,1550],[2038,2040]];
const noise = i => { const v = Math.sin(i * 12.9898) * 43758.5453; return v - Math.floor(v); };
let bars = '';
for (let i = 0, x = 168; x < 2453; x += 7.68, i++) {
  const inside = r => r.some(([a, b]) => x >= a - 1 && x < b);
  const n = noise(i), wave = .5 + .5 * Math.sin(x / 38);
  if (inside(neg)) { const h = 12 + 12 * wave + 9 * n; bars += `<rect x="${x}" y="371" width="6" height="${h}" fill="#080808"/>`; }
  else { const h = inside(flat) ? 3 : 10 + 12 * wave + 9 * n; bars += `<rect x="${x}" y="${370-h}" width="6" height="${h}" fill="#fff"/>`; }
}
$('trend').innerHTML = lines(bright, 339, 66, 3, .6) + bars + '<path d="M168 371.500H2453" stroke="#111" stroke-width="4" stroke-dasharray="4 3.680"/>';

/* Price candles along the daily path */
const path = '56,352 58,354 60,356 62,352 63,340 66,334 70,330 73,334 76,335 79,341 83,340 85,337 86,309 88,315 90,318 93,317 97,319 99,326 101,335 104,341 108,343 112,351 116,348 119,350 120,366 122,377 125,366 128,358 132,355 134,353 136,336 139,341 143,345 147,348 151,349 153,340 155,324 159,318 164,317 168,317 172,320 176,328 178,318 181,328 188,328 192,335 196,331 200,326 202,314 203,345 207,337 210,332 214,325 218,328 221,320 225,308 229,306 235,306 238,315 242,311 247,306 250,314 254,315 258,313 260,328 263,338 266,330 270,313 274,316 278,324 284,333 287,318 291,316 297,312 299,321 303,324 306,325 308,313 312,305 314,283 318,271 322,275 325,274 328,281 332,276 337,274 341,272 343,266 346,275 350,273 354,274 357,287 362,285 367,288 370,304 373,310 377,300 382,298 388,297 392,302 398,296 401,307 404,313 408,307 411,300 415,303 420,301 424,297 430,298 434,298 436,286 441,286 444,289 447,301 450,306 455,302 458,311 462,316 467,312 471,311 475,317 480,324 483,319 487,315 493,311 499,308 504,308 507,318 509,323 512,308 516,302 520,306 524,303 526,314 530,308 534,310 538,302 544,298 549,294 551,268 556,275 560,280 564,288 567,275 572,280 578,283 582,282 586,278 590,270 595,268 597,256 601,256 604,245 608,230 613,225 616,224 618,235 622,237 626,242 629,250 631,270 634,265 637,257 641,248 643,255 645,268 647,294 650,298 653,308 655,340 658,340 660,357 662,320 664,262 667,275 670,290 672,300 673,310 675,280 676,260 679,280 681,267 684,255 687,255 690,272 694,265 698,258 700,272 703,295 706,290 709,276 712,275 716,268 720,272 725,268 729,275 735,279 740,290 745,286 750,287 754,275 757,274 759,330 760,350 763,345 766,335 770,320 775,298 778,293 781,312 785,300 788,285 792,286 795,282 799,274 802,291 806,290 811,291 814,296 817,302'
  .split(' ').map(p => p.split(',').map(Number));
const level = x => { let j = 1; while (j < path.length - 1 && path[j][0] < x) j++; const [a, b] = path[j-1], [c, d] = path[j]; return b + (d - b) * (x - a) / (c - a); };
let candles = '', prev = 352;
for (let i = 0, x = 56; x <= 817; x += 2.56, i++) {
  const wild = x > 646 && x < 700 ? 4 : 1, n = noise(i + 7), m = noise(i + 400);
  const close = level(x) + (n - .5) * 6 * Math.min(wild, 2), top = Math.min(prev, close), h = Math.max(1.500, Math.abs(close - prev));
  const hi = top - m * 4 * wild, lo = top + h + n * 4 * wild, up = close < prev;
  candles += `<path d="M${x+.5} ${hi}V${lo}" stroke="${up ? '#999' : '#7391b5'}" stroke-width=".8"/>` +
    (up ? `<rect x="${x-.4}" y="${top}" width="1.800" height="${h}" fill="#262626" stroke="#b5b5b5" stroke-width=".7"/>`
        : `<rect x="${x-.7}" y="${top}" width="2.400" height="${h}" fill="#7391b5"/>`);
  if (m > .3) candles += `<rect x="${x-.5}" y="${hi - (i % 3) * 2}" width="2" height="1.700" fill="#f01414"/>`;
  if (n > .3) candles += `<rect x="${x-.5}" y="${lo + (i % 4)}" width="1.700" height="1.300" fill="#0b5a12"/>`;
  prev = close;
}
const extra = [[86.500,293],[341.500,256],[675,230],[687.500,240],[778,281],[435,280],[513,293],[796,266],[619,218],[614,219]];
candles += '<path d="M86.500 299v18M551.500 257v18M664.500 250v40M677.500 242v30M760.500 323v46" stroke="#8fa6c0" stroke-width=".9"/>' +
  extra.map(([x, y]) => `<rect x="${x-1}" y="${y}" width="2.500" height="2" fill="#f01414"/>`).join('');
$('price').innerHTML = lines(dark, 201, 204, 1, 1) + candles;

/* Price scale */
let left = '', right = '';
for (let i = -3; i <= 53; i++) {
  const y = 214.700 + i * 3.520, len = i % 5 === 0 ? 5 : 2;
  left += `M${33-len} ${y}h${len}`; right += `M0 ${y}h${len}`;
}
$('ticksL').innerHTML = `<path d="M32.500 201V405${left}" stroke="#ccc"/>`;
$('ticksR').innerHTML = `<path d="M.5 201V405${right}" stroke="#ccc"/>`;
document.querySelectorAll('.levels').forEach(e => {
  for (let v = 17.5; v >= 12.5; v -= .5) e.innerHTML += v === 15 ? '<li class="now"><b>15.03500</b></li>' : `<li>${v.toFixed(1)}</li>`;
});

/* Time scale */
let weeks = '', days = '';
for (let x = 56; x < 846; x += 12.55) weeks += `M${Math.round(x)+.5} 0v3`;
for (let x = 56, i = 0; x < 817; x += 5.12, i++) days += `<rect x="${x}" y="-1" width="2" height="1" fill="${reds.some(([a, b]) => x >= a && x <= b) ? '#b01818' : '#0f6a18'}"/>`;
$('weeks').setAttribute('overflow', 'visible');
$('weeks').innerHTML = `<path d="${weeks}M55 .500H847" stroke="#aaa"/>` + days;
'il May June July August September October November December 2020 February March April May June'.split(' ').forEach(m => $('months').insertAdjacentHTML('beforeend', `<span>${m}</span>`));

/* Palette and layout slots */
'#0f0 #f5a93b #f00 #cc55cc #ffb6c8 #fff #0a8a0a #065206 #000 #ff8000 #e06000 #7d7dc4 #ffe0dc #00005c #00008c #ffd800'.split(' ').forEach((c, i) => {
  const b = document.createElement('button'); b.style.background = c; b.setAttribute('aria-label', 'Colour ' + (i + 1)); $('swatches').append(b);
});
for (let i = 1; i <= 6; i++) $('layouts').insertAdjacentHTML('beforeend',
  `<button class="tool narrow" aria-label="Layout ${i}"><svg width="12" height="10"><path d="M.5.500h10v8H.5z" fill="#fff" stroke="#93b1c4"/><path d="m1 7 2-2 1 1 2-3" stroke="#d04444" fill="none"/><text x="6" y="8" font-size="8" fill="#222">${i}</text></svg></button>`);
</script>
</body>
</html>
